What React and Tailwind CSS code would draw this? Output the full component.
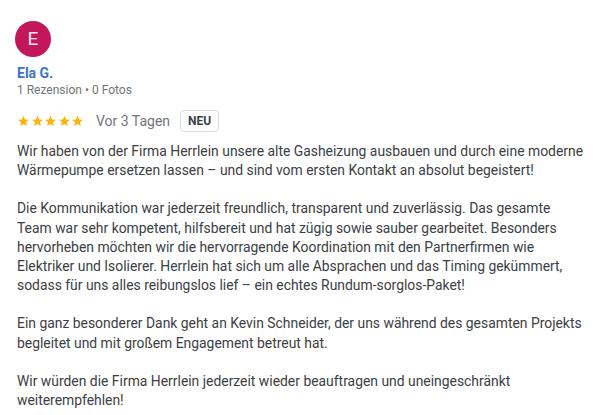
const paragraphs = [
  'Wir haben von der Firma Herrlein unsere alte Gasheizung ausbauen und durch eine moderne Wärmepumpe ersetzen lassen – und sind vom ersten Kontakt an absolut begeistert!',
  'Die Kommunikation war jederzeit freundlich, transparent und zuverlässig. Das gesamte Team war sehr kompetent, hilfsbereit und hat zügig sowie sauber gearbeitet. Besonders hervorheben möchten wir die hervorragende Koordination mit den Partnerfirmen wie Elektriker und Isolierer. Herrlein hat sich um alle Absprachen und das Timing gekümmert, sodass für uns alles reibungslos lief – ein echtes Rundum-sorglos-Paket!',
  'Ein ganz besonderer Dank geht an Kevin Schneider, der uns während des gesamten Projekts begleitet und mit großem Engagement betreut hat.',
  'Wir würden die Firma Herrlein jederzeit wieder beauftragen und uneingeschränkt weiterempfehlen!',
];

function Star() {
  return (
    <svg viewBox="0 0 24 24" className="h-[14px] w-[13px]" fill="#f6b60b">
      <path d="M12 2.5l2.9 6.6 7.1.6-5.4 4.7 1.6 7-6.2-3.8-6.2 3.8 1.6-7L2 9.7l7.1-.6z" />
    </svg>
  );
}

export default function App() {
  return (
    <div className="w-[600px] h-[415px] overflow-hidden bg-white pl-[17px] pr-[14px] pt-[21px] font-['Roboto',sans-serif]">
      <div className="ml-[-2px] flex h-9 w-9 items-center justify-center rounded-full bg-[#c2185b] text-[19px] text-[#fde4ee]">
        E
      </div>
      <div className="mt-[7px] text-[14px] font-bold leading-[18px] text-[#3b74c2]">Ela G.</div>
      <div className="text-[12px] leading-4 text-[#70757a]">1 Rezension • 0 Fotos</div>
      <div className="mt-[12px] flex items-center">
        <div className="flex gap-[0.5px]">
          <Star />
          <Star />
          <Star />
          <Star />
          <Star />
        </div>
        <span className="ml-[12px] text-[14px] text-[#70757a]">Vor 3 Tagen</span>
        <span className="ml-[10px] rounded-[4px] border border-[#dadce0] px-[7px] text-[12px] font-bold leading-5 text-[#3c4043]">
          NEU
        </span>
      </div>
      <div className="mt-[10px] flex flex-col gap-[19px] text-[13.9px] leading-[19.2px] text-[#3c4043]">
        {paragraphs.map((p, i) => (
          <p key={i}>{p}</p>
        ))}
      </div>
    </div>
  );
}
